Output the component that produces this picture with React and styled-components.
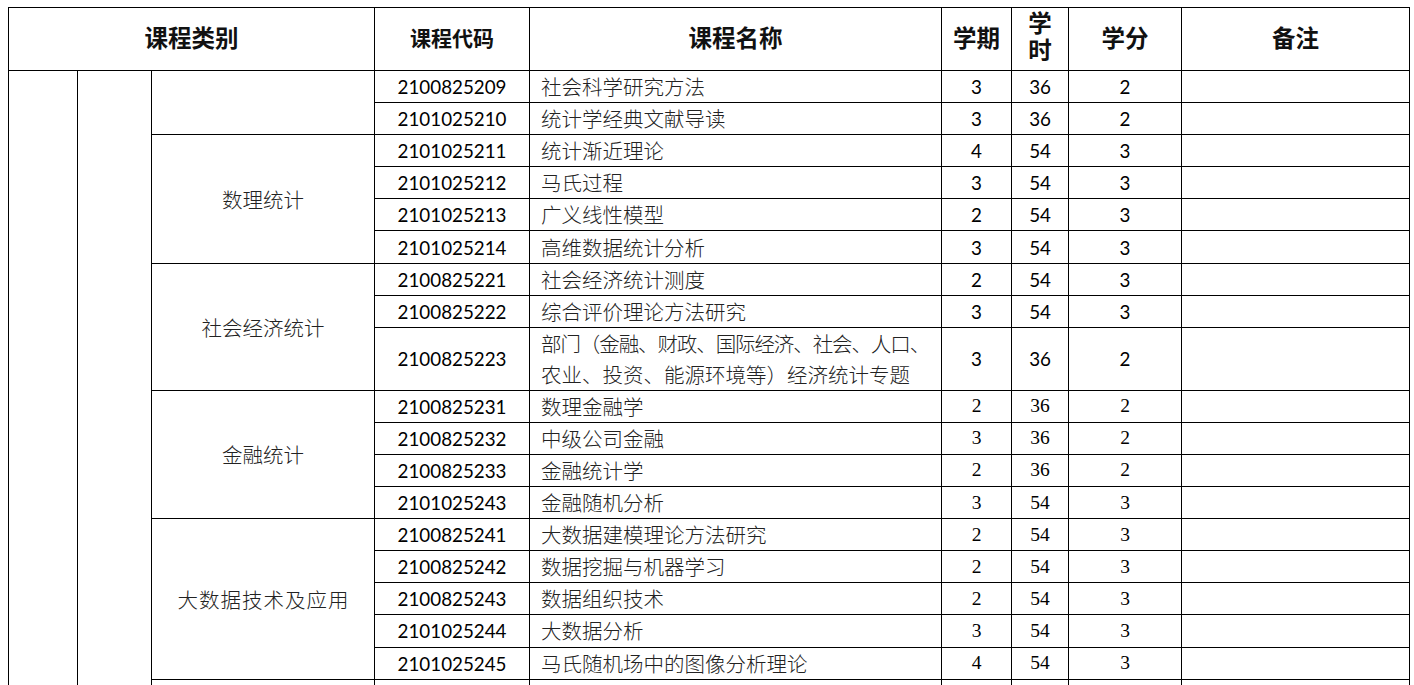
import React from "react";
import styled, { createGlobalStyle } from "styled-components";

const GlobalStyle = createGlobalStyle`
  html, body { margin: 0; padding: 0; background: #fff; }
  body { font-family: "Noto Sans CJK SC", sans-serif; color: #000; }
`;

const Page = styled.div`
  position: relative;
  box-sizing: border-box;
  height: 685px;
  overflow: hidden;
  padding: 7px 0 0 8px;
`;

const Table = styled.table`
  border-collapse: collapse;
  table-layout: fixed;
  width: 1401px;
`;

const HeadRow = styled.tr`
  height: 62px;
`;

const BodyRow = styled.tr`
  height: ${(p) => (p.$double ? "62.5px" : "32.1px")};
`;

const Cell = styled.td`
  border: 1px solid #000;
  padding: 0;
  vertical-align: middle;
  text-align: center;
  white-space: nowrap;
  overflow: hidden;
`;

const HeadCell = styled(Cell).attrs({ as: "th" })`
  font-family: "Noto Sans CJK SC", sans-serif;
  font-weight: 700;
  font-size: ${(p) => (p.$small ? "21px" : "23.5px")};
  line-height: 30px;
  color: #111;
  padding-bottom: ${(p) => (p.$stack ? "0" : "4px")};
  ${(p) => (p.$dashedBottom ? "border-bottom: 1px dashed #bbb;" : "")}
`;

const Stacked = styled.span`
  display: inline-block;
  writing-mode: vertical-rl;
  text-orientation: upright;
  letter-spacing: 3.5px;
  line-height: 30px;
  margin-top: 3px;
`;

const SideCell = styled(Cell)``;

const CategoryCell = styled(Cell)`
  font-family: "Noto Sans CJK SC", sans-serif;
  font-weight: 300;
  font-size: 20.5px;
  color: #222;
  letter-spacing: ${(p) => (p.$spread ? "1px" : "0")};
  padding-left: ${(p) => (p.$spread ? "1px" : "0")};
`;

const CodeCell = styled(Cell)`
  font-family: Lato, "Open Sans", sans-serif;
  font-size: 18.8px;
  color: #000;
`;

const NameCell = styled(Cell)`
  text-align: left;
  padding-left: 11px;
  font-family: "Noto Sans CJK SC", sans-serif;
  font-weight: 300;
  font-size: 20.5px;
  line-height: 31px;
  color: #222;
`;

const NameLine = styled.div`
  letter-spacing: ${(p) => (p.$tight ? "-1.1px" : "0")};
`;

const NumCell = styled(Cell)`
  font-family: ${(p) =>
    p.$serif ? '"Liberation Serif", serif' : 'Lato, "Open Sans", sans-serif'};
  font-size: ${(p) => (p.$serif ? "19.5px" : "18.8px")};
  color: #000;
`;

const NoteCell = styled(Cell)``;

const groups = [
  {
    name: "",
    rows: [
      ["2100825209", "社会科学研究方法", 3, 36, 2],
      ["2101025210", "统计学经典文献导读", 3, 36, 2],
    ],
  },
  {
    name: "数理统计",
    rows: [
      ["2101025211", "统计渐近理论", 4, 54, 3],
      ["2101025212", "马氏过程", 3, 54, 3],
      ["2101025213", "广义线性模型", 2, 54, 3],
      ["2101025214", "高维数据统计分析", 3, 54, 3],
    ],
  },
  {
    name: "社会经济统计",
    rows: [
      ["2100825221", "社会经济统计测度", 2, 54, 3],
      ["2100825222", "综合评价理论方法研究", 3, 54, 3],
      [
        "2100825223",
        ["部门（金融、财政、国际经济、社会、人口、", "农业、投资、能源环境等）经济统计专题"],
        3,
        36,
        2,
      ],
    ],
  },
  {
    name: "金融统计",
    serif: true,
    rows: [
      ["2100825231", "数理金融学", 2, 36, 2],
      ["2100825232", "中级公司金融", 3, 36, 2],
      ["2100825233", "金融统计学", 2, 36, 2],
      ["2101025243", "金融随机分析", 3, 54, 3],
    ],
  },
  {
    name: "大数据技术及应用",
    serif: true,
    spread: true,
    rows: [
      ["2100825241", "大数据建模理论方法研究", 2, 54, 3],
      ["2100825242", "数据挖掘与机器学习", 2, 54, 3],
      ["2100825243", "数据组织技术", 2, 54, 3],
      ["2101025244", "大数据分析", 3, 54, 3],
      ["2101025245", "马氏随机场中的图像分析理论", 4, 54, 3],
    ],
  },
];

const totalRows = groups.reduce((n, g) => n + g.rows.length, 0) + 1;

export default function App() {
  let first = true;
  return (
    <>
      <GlobalStyle />
      <Page>
        <Table>
          <colgroup>
            <col style={{ width: 69 }} />
            <col style={{ width: 74 }} />
            <col style={{ width: 223 }} />
            <col style={{ width: 155 }} />
            <col style={{ width: 412 }} />
            <col style={{ width: 70 }} />
            <col style={{ width: 57 }} />
            <col style={{ width: 113 }} />
            <col style={{ width: 228 }} />
          </colgroup>
          <thead>
            <HeadRow>
              <HeadCell colSpan={3}>课程类别</HeadCell>
              <HeadCell $small $dashedBottom>
                课程代码
              </HeadCell>
              <HeadCell>课程名称</HeadCell>
              <HeadCell>学期</HeadCell>
              <HeadCell $stack>
                <Stacked>学时</Stacked>
              </HeadCell>
              <HeadCell>学分</HeadCell>
              <HeadCell>备注</HeadCell>
            </HeadRow>
          </thead>
          <tbody>
            {groups.map((g, gi) =>
              g.rows.map(([code, name, term, hours, credit], ri) => {
                const lead = first;
                first = false;
                const multi = Array.isArray(name);
                return (
                  <BodyRow key={`${gi}-${ri}`} $double={multi}>
                    {lead && (
                      <>
                        <SideCell rowSpan={totalRows} />
                        <SideCell rowSpan={totalRows} />
                      </>
                    )}
                    {ri === 0 && (
                      <CategoryCell rowSpan={g.rows.length} $spread={g.spread}>
                        {g.name}
                      </CategoryCell>
                    )}
                    <CodeCell>{code}</CodeCell>
                    <NameCell>
                      {multi
                        ? name.map((line, li) => (
                            <NameLine key={li} $tight={li === 0}>
                              {line}
                            </NameLine>
                          ))
                        : name}
                    </NameCell>
                    <NumCell $serif={g.serif}>{term}</NumCell>
                    <NumCell $serif={g.serif}>{hours}</NumCell>
                    <NumCell $serif={g.serif}>{credit}</NumCell>
                    <NoteCell />
                  </BodyRow>
                );
              })
            )}
            <BodyRow>
              <CategoryCell />
              <CodeCell />
              <NameCell />
              <NumCell />
              <NumCell />
              <NumCell />
              <NoteCell />
            </BodyRow>
          </tbody>
        </Table>
      </Page>
    </>
  );
}
